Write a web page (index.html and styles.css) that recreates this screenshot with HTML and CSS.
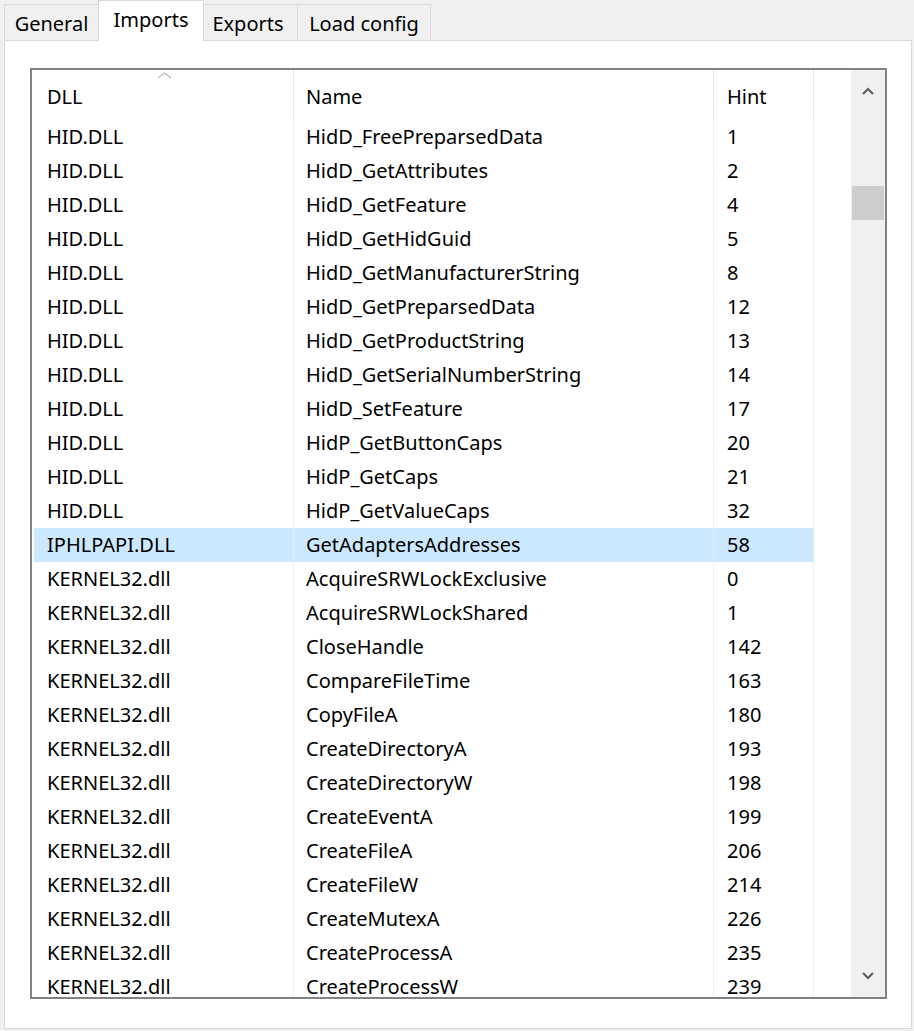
FILE: index.html
```html
<!DOCTYPE html>
<html>
<head>
<meta charset="utf-8">
<link rel="stylesheet" href="styles.css">
</head>
<body>
<div class="tabs">
  <div class="tab tab-general">General</div>
  <div class="tab tab-imports active">Imports</div>
  <div class="tab tab-exports">Exports</div>
  <div class="tab tab-load">Load config</div>
</div>
<div class="panel">
  <div class="listview">
    <div class="list">
      <div class="row header">
        <div class="cell c1">DLL<svg class="sort" width="15" height="7" viewBox="0 0 15 7"><polyline points="1,6 7.5,1 14,6" fill="none" stroke="#9a9a9a" stroke-width="1"/></svg></div>
        <div class="cell c2">Name</div>
        <div class="cell c3">Hint</div>
        <div class="cell c4"></div>
      </div>
      <div class="body">
        <div class="row"><div class="cell c1">HID.DLL</div><div class="cell c2">HidD_FreePreparsedData</div><div class="cell c3">1</div><div class="cell c4"></div></div>
        <div class="row"><div class="cell c1">HID.DLL</div><div class="cell c2">HidD_GetAttributes</div><div class="cell c3">2</div><div class="cell c4"></div></div>
        <div class="row"><div class="cell c1">HID.DLL</div><div class="cell c2">HidD_GetFeature</div><div class="cell c3">4</div><div class="cell c4"></div></div>
        <div class="row"><div class="cell c1">HID.DLL</div><div class="cell c2">HidD_GetHidGuid</div><div class="cell c3">5</div><div class="cell c4"></div></div>
        <div class="row"><div class="cell c1">HID.DLL</div><div class="cell c2">HidD_GetManufacturerString</div><div class="cell c3">8</div><div class="cell c4"></div></div>
        <div class="row"><div class="cell c1">HID.DLL</div><div class="cell c2">HidD_GetPreparsedData</div><div class="cell c3">12</div><div class="cell c4"></div></div>
        <div class="row"><div class="cell c1">HID.DLL</div><div class="cell c2">HidD_GetProductString</div><div class="cell c3">13</div><div class="cell c4"></div></div>
        <div class="row"><div class="cell c1">HID.DLL</div><div class="cell c2">HidD_GetSerialNumberString</div><div class="cell c3">14</div><div class="cell c4"></div></div>
        <div class="row"><div class="cell c1">HID.DLL</div><div class="cell c2">HidD_SetFeature</div><div class="cell c3">17</div><div class="cell c4"></div></div>
        <div class="row"><div class="cell c1">HID.DLL</div><div class="cell c2">HidP_GetButtonCaps</div><div class="cell c3">20</div><div class="cell c4"></div></div>
        <div class="row"><div class="cell c1">HID.DLL</div><div class="cell c2">HidP_GetCaps</div><div class="cell c3">21</div><div class="cell c4"></div></div>
        <div class="row"><div class="cell c1">HID.DLL</div><div class="cell c2">HidP_GetValueCaps</div><div class="cell c3">32</div><div class="cell c4"></div></div>
        <div class="row selected"><div class="cell c1">IPHLPAPI.DLL</div><div class="cell c2">GetAdaptersAddresses</div><div class="cell c3">58</div><div class="cell c4"></div></div>
        <div class="row"><div class="cell c1">KERNEL32.dll</div><div class="cell c2">AcquireSRWLockExclusive</div><div class="cell c3">0</div><div class="cell c4"></div></div>
        <div class="row"><div class="cell c1">KERNEL32.dll</div><div class="cell c2">AcquireSRWLockShared</div><div class="cell c3">1</div><div class="cell c4"></div></div>
        <div class="row"><div class="cell c1">KERNEL32.dll</div><div class="cell c2">CloseHandle</div><div class="cell c3">142</div><div class="cell c4"></div></div>
        <div class="row"><div class="cell c1">KERNEL32.dll</div><div class="cell c2">CompareFileTime</div><div class="cell c3">163</div><div class="cell c4"></div></div>
        <div class="row"><div class="cell c1">KERNEL32.dll</div><div class="cell c2">CopyFileA</div><div class="cell c3">180</div><div class="cell c4"></div></div>
        <div class="row"><div class="cell c1">KERNEL32.dll</div><div class="cell c2">CreateDirectoryA</div><div class="cell c3">193</div><div class="cell c4"></div></div>
        <div class="row"><div class="cell c1">KERNEL32.dll</div><div class="cell c2">CreateDirectoryW</div><div class="cell c3">198</div><div class="cell c4"></div></div>
        <div class="row"><div class="cell c1">KERNEL32.dll</div><div class="cell c2">CreateEventA</div><div class="cell c3">199</div><div class="cell c4"></div></div>
        <div class="row"><div class="cell c1">KERNEL32.dll</div><div class="cell c2">CreateFileA</div><div class="cell c3">206</div><div class="cell c4"></div></div>
        <div class="row"><div class="cell c1">KERNEL32.dll</div><div class="cell c2">CreateFileW</div><div class="cell c3">214</div><div class="cell c4"></div></div>
        <div class="row"><div class="cell c1">KERNEL32.dll</div><div class="cell c2">CreateMutexA</div><div class="cell c3">226</div><div class="cell c4"></div></div>
        <div class="row"><div class="cell c1">KERNEL32.dll</div><div class="cell c2">CreateProcessA</div><div class="cell c3">235</div><div class="cell c4"></div></div>
        <div class="row"><div class="cell c1">KERNEL32.dll</div><div class="cell c2">CreateProcessW</div><div class="cell c3">239</div><div class="cell c4"></div></div>
      </div>
    </div>
    <div class="scrollbar">
      <div class="sb-btn"><svg width="12" height="8" viewBox="0 0 12 8"><polyline points="1,7 6,2 11,7" fill="none" stroke="#606060" stroke-width="2.2"/></svg></div>
      <div class="sb-track"><div class="sb-thumb"></div></div>
      <div class="sb-btn"><svg width="12" height="8" viewBox="0 0 12 8"><polyline points="1,1 6,6 11,1" fill="none" stroke="#606060" stroke-width="2.2"/></svg></div>
    </div>
  </div>
</div>
</body>
</html>
```

FILE: styles.css
```css
html, body {
  margin: 0;
  padding: 0;
  background: #f0f0f0;
  font-family: "Noto Sans", "Segoe UI", sans-serif;
  font-size: 20px;
  color: #000;
}

.tabs {
  display: flex;
  align-items: flex-end;
  height: 40px;
  padding-left: 4px;
}

.tab {
  box-sizing: border-box;
  height: 36px;
  border: 1px solid #d9d9d9;
  border-bottom: none;
  background: #f0f0f0;
  display: flex;
  align-items: center;
  justify-content: center;
  padding-top: 3px;
  line-height: 1;
}

.tab-general { width: 95px; }
.tab-imports { width: 106px; margin-left: -1px; }
.tab-exports { width: 95px; margin-left: -1px; padding-right: 5px; }
.tab-load { width: 134px; margin-left: -1px; }

.tab.active {
  height: 41px;
  margin-bottom: -1px;
  background: #fff;
  position: relative;
  z-index: 1;
  padding-top: 0;
  padding-bottom: 3px;
}

.panel {
  box-sizing: border-box;
  margin-left: 4px;
  width: 908px;
  height: 989px;
  border: 1px solid #d9d9d9;
  background: #fff;
  padding: 27px 0 0 25px;
}

.listview {
  box-sizing: border-box;
  width: 857px;
  height: 931px;
  border: 2px solid #828282;
  display: flex;
  background: #fff;
}

.list {
  flex: 1;
  overflow: hidden;
  padding-left: 2px;
}

.row {
  display: grid;
  grid-template-columns: 260px 420px 100px 37px;
  height: 34px;
}

.row.header {
  height: 50px;
}

.cell {
  box-sizing: border-box;
  display: flex;
  align-items: center;
  white-space: nowrap;
  border-right: 1px solid #f0f0f0;
  padding-left: 12px;
  padding-bottom: 2px;
}

.cell.c1 { padding-left: 13px; }
.cell.c3 { padding-left: 13px; }
.cell.c4 { border-right: none; }

.header .cell {
  border-right-color: #e5e5e5;
  padding-top: 2px;
  padding-bottom: 0;
  position: relative;
}

.header .cell.c4 { border-right: none; }

.sort {
  position: absolute;
  left: 123px;
  top: 2px;
}

.row.selected {
  background: #cce8ff;
}

.row.selected .cell {
  border-right-color: #dbeefc;
}

.row.selected .cell.c4 {
  background: #fff;
}

.scrollbar {
  width: 34px;
  background: #f0f0f0;
  display: flex;
  flex-direction: column;
}

.sb-btn {
  height: 42px;
  display: flex;
  align-items: center;
  justify-content: center;
}

.sb-track {
  flex: 1;
}

.sb-thumb {
  margin-top: 74px;
  margin-left: 1px;
  width: 32px;
  height: 34px;
  background: #cdcdcd;
}
```
